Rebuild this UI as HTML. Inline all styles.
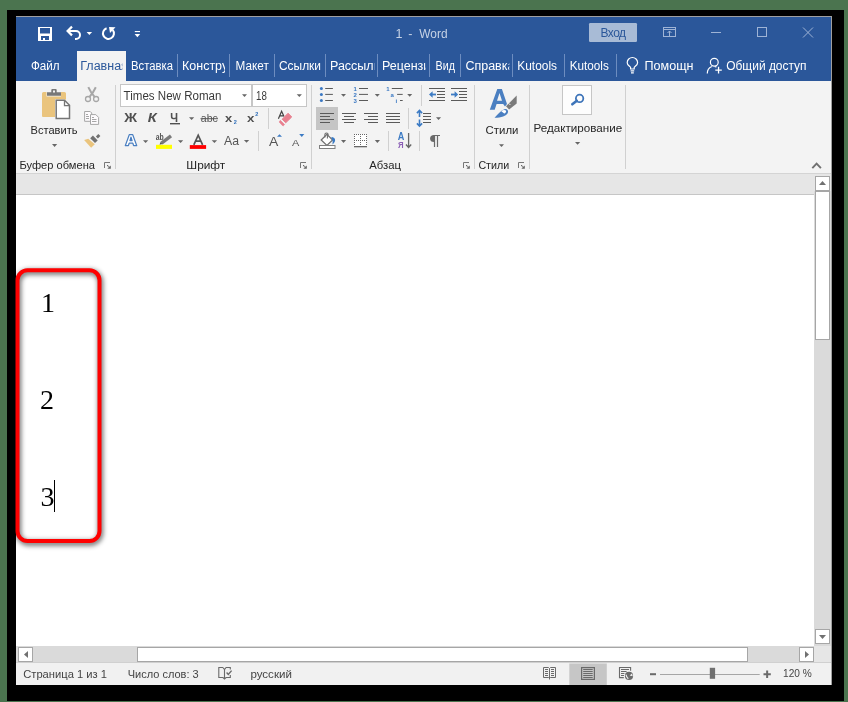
<!DOCTYPE html>
<html><head><meta charset="utf-8">
<style>
html,body{margin:0;padding:0;width:848px;height:702px;overflow:hidden;background:#4b744f}
svg{display:block;will-change:transform}
text{font-family:"Liberation Sans",sans-serif}
.w{fill:#fff;font-size:12.5px}
.r{fill:#262626;font-size:11.5px}
.s{fill:#444;font-size:11px}
.d{font-family:"Liberation Serif",serif;fill:#000;font-size:28px}
</style></head><body>
<svg width="848" height="702" viewBox="0 0 848 702">
<defs>
<clipPath id="c1"><rect x="77" y="50" width="45.3" height="31"/></clipPath>
<clipPath id="c2"><rect x="178" y="50" width="47" height="31"/></clipPath>
<clipPath id="c3"><rect x="326" y="50" width="48.5" height="31"/></clipPath>
<clipPath id="c4"><rect x="378" y="50" width="47.5" height="31"/></clipPath>
<clipPath id="c5"><rect x="461" y="50" width="48.3" height="31"/></clipPath>
<filter id="sh" x="-20%" y="-20%" width="140%" height="140%"><feGaussianBlur stdDeviation="2"/></filter>
</defs>
<!-- frame -->
<rect x="7" y="10" width="837" height="691" fill="#000"/>
<rect x="16" y="16" width="816" height="669" fill="#a0a0a0"/>
<!-- title + tabs -->
<rect x="16" y="17" width="815" height="64" fill="#2b579a"/>
<!-- ribbon -->
<rect x="16" y="81" width="815" height="92" fill="#f3f3f3"/>
<rect x="16" y="173" width="815" height="1" fill="#d4d4d4"/>
<rect x="16" y="174" width="815" height="20" fill="#e6e6e6"/>
<rect x="16" y="194" width="798" height="1" fill="#c6c6c6"/>
<rect x="16" y="195" width="798" height="451" fill="#fff"/>
<!-- vscroll -->
<rect x="814" y="191" width="17" height="455" fill="#dadada"/>
<rect x="815.5" y="176.5" width="14" height="14" fill="#fff" stroke="#a6a6a6"/>
<path d="M819 185h7l-3.5-4z" fill="#707070"/>
<rect x="815.5" y="191.5" width="14" height="148" fill="#fff" stroke="#a6a6a6"/>
<rect x="815.5" y="629.5" width="14" height="14" fill="#fff" stroke="#a6a6a6"/>
<path d="M819 635h7l-3.5 4z" fill="#707070"/>
<!-- hscroll -->
<rect x="16" y="646" width="798" height="16" fill="#dadada"/>
<rect x="814" y="646" width="17" height="16" fill="#e6e6e6"/>
<rect x="18.5" y="647.5" width="14" height="14" fill="#fff" stroke="#a6a6a6"/>
<path d="M24 654.5l4 -3.5v7z" fill="#707070"/>
<rect x="137.5" y="647.5" width="610" height="14" fill="#fff" stroke="#a6a6a6"/>
<rect x="799.5" y="647.5" width="14" height="14" fill="#fff" stroke="#a6a6a6"/>
<path d="M809 654.5l-4 -3.5v7z" fill="#707070"/>
<!-- status -->
<rect x="16" y="662" width="815" height="1" fill="#d0d0d0"/>
<rect x="16" y="663" width="815" height="22" fill="#f1f1f1"/>


<!-- title icons -->
<path fill="#fff" fill-rule="evenodd" d="M38 27h14v14H38z M40 28h10v5.5H40z M41 36h8v4H41z"/>
<rect x="43" y="38" width="2" height="2" fill="#fff"/>
<path d="M67.5 31h8.5a4 4 0 0 1 0 8h-1" fill="none" stroke="#fff" stroke-width="2"/>
<path d="M72 26.6L67.6 31L72 35.4" fill="none" stroke="#fff" stroke-width="2.2"/>
<path d="M86.6 32h5.5l-2.75 3z" fill="#fff"/>
<path d="M106.6 28.2A5.5 5.5 0 1 0 112.7 29.9" fill="none" stroke="#fff" stroke-width="2"/>
<path d="M109 27L115.5 27.3L110 33Z" fill="#fff"/>
<rect x="134.8" y="31" width="5.2" height="1.1" fill="#fff"/>
<path d="M134.6 34h5.6l-2.8 3.2z" fill="#fff"/>
<g fill="none" stroke="#9fb4d6" stroke-width="1">
<rect x="663.5" y="27.5" width="12" height="9"/>
<path d="M663.5 29.5h12 M669.5 31v6 M667.5 33l2-2 2 2"/>
<path d="M711 32.5h10"/>
<rect x="757.5" y="27.5" width="9" height="9"/>
<path d="M803 27.5l10 10 M813 27.5l-10 10"/>
</g>
<!-- title texts -->
<g fill="#c7d3e6" font-size="12.5"><text x="395.5" y="38">1</text><text x="408.3" y="38">-</text><text x="419.3" y="38" textLength="28.2" lengthAdjust="spacingAndGlyphs">Word</text></g>
<rect x="589" y="23" width="48" height="19" rx="1.2" fill="#a8bbd6"/>
<text x="600.5" y="36.9" fill="#2b579a" font-size="12" textLength="25.5" lengthAdjust="spacing">Вход</text>
<!-- tabs -->
<rect x="77" y="51" width="49" height="30" fill="#f3f3f3"/>
<g class="w">
<text x="31" y="70.2" textLength="28.6" lengthAdjust="spacingAndGlyphs">Файл</text>
<text x="131" y="70.2" textLength="42" lengthAdjust="spacingAndGlyphs">Вставка</text>
<text x="235.6" y="70.2" textLength="33.2" lengthAdjust="spacingAndGlyphs">Макет</text>
<text x="279" y="70.2" textLength="42" lengthAdjust="spacingAndGlyphs">Ссылки</text>
<text x="435.6" y="70.2" textLength="19.4" lengthAdjust="spacingAndGlyphs">Вид</text>
<text x="517.3" y="70.2" textLength="39.7" lengthAdjust="spacingAndGlyphs">Kutools</text>
<text x="569.7" y="70.2" textLength="39.1" lengthAdjust="spacingAndGlyphs">Kutools</text>
<text x="644.5" y="70.2" textLength="49" lengthAdjust="spacingAndGlyphs">Помощн</text>
<text x="726.2" y="70.2" textLength="80.4" lengthAdjust="spacingAndGlyphs">Общий доступ</text>
<g clip-path="url(#c2)"><text x="182" y="70.2">Конструктор</text></g>
<g clip-path="url(#c3)"><text x="330" y="70.2">Рассылки</text></g>
<g clip-path="url(#c4)"><text x="382" y="70.2">Рецензирование</text></g>
<g clip-path="url(#c5)"><text x="465.4" y="70.2">Справка</text></g>
</g>
<g clip-path="url(#c1)"><text x="80.3" y="70.2" fill="#2b579a" font-size="12.5">Главная</text></g>

<!-- tab icons -->
<g fill="none" stroke="#fff" stroke-width="1.2">
<path d="M630.6 69V67.6C630.6 66.5 627.2 65.5 627.2 62.7A5.2 5.2 0 0 1 637.6 62.7C637.6 65.5 634.2 66.5 634.2 67.6V69Z"/>
<path d="M630.6 70.8h3.6 M631 72.8h2.8"/>
<circle cx="714.3" cy="62.3" r="3.9"/>
<path d="M707.3 73.6A7.5 7.5 0 0 1 711.8 66.5 M714.8 66.6A5 5 0 0 1 716.5 67"/>
<path d="M715.3 70.2h6.5 M718.55 66.8v6.6" stroke-width="1.3"/>
</g>
<g fill="#6d8dc0">
<rect x="177" y="54" width="1" height="23"/><rect x="229" y="54" width="1" height="23"/><rect x="274" y="54" width="1" height="23"/>
<rect x="325" y="54" width="1" height="23"/><rect x="377" y="54" width="1" height="23"/><rect x="429" y="54" width="1" height="23"/>
<rect x="460" y="54" width="1" height="23"/><rect x="512" y="54" width="1" height="23"/><rect x="564" y="54" width="1" height="23"/>
<rect x="616" y="54" width="1" height="23"/>
</g>

<!-- ribbon separators -->
<g fill="#d0d0d0">
<rect x="115" y="85" width="1" height="84"/>
<rect x="311" y="85" width="1" height="84"/>
<rect x="474" y="85" width="1" height="84"/>
<rect x="529" y="85" width="1" height="84"/>
<rect x="625" y="85" width="1" height="84"/>
<rect x="268" y="108" width="1" height="21"/>
<rect x="258" y="131" width="1" height="20"/>
<rect x="421" y="85" width="1" height="21"/>
<rect x="408" y="108" width="1" height="21"/>
<rect x="388" y="131" width="1" height="20"/>
<rect x="419" y="131" width="1" height="20"/>
</g>
<!-- combos -->
<rect x="120.5" y="84.5" width="131" height="22" fill="#fff" stroke="#c6c6c6"/>
<rect x="252.5" y="84.5" width="54" height="22" fill="#fff" stroke="#c6c6c6"/>
<text x="123.6" y="100" fill="#3a3a3a" font-size="12" textLength="97.8" lengthAdjust="spacingAndGlyphs">Times New Roman</text>
<text x="256" y="100" fill="#3a3a3a" font-size="12" textLength="10.8" lengthAdjust="spacingAndGlyphs">18</text>
<!-- dropdown arrows -->
<g fill="#666">
<path d="M52 144h5.2l-2.6 3z"/>
<path d="M242 94.3h5l-2.5 2.8z"/>
<path d="M296.7 94.3h5.2l-2.6 2.8z"/>
<path d="M189 117.2h5.2l-2.6 2.8z"/>
<path d="M143 140.3h5.2l-2.6 2.8z"/>
<path d="M178 140.3h5.2l-2.6 2.8z"/>
<path d="M211.7 140.3h5.4l-2.7 2.8z"/>
<path d="M243.9 140.1h5.3l-2.65 2.7z"/>
<path d="M341 94.1h5l-2.5 2.7z"/>
<path d="M374.8 94.1h5l-2.5 2.7z"/>
<path d="M407.2 94.1h5l-2.5 2.7z"/>
<path d="M436 117.2h5.1l-2.55 2.8z"/>
<path d="M341 140h5.1l-2.55 2.9z"/>
<path d="M374.8 140h5.2l-2.6 2.9z"/>
<path d="M499 144.3h5l-2.5 2.8z"/>
<path d="M575 142h5.2l-2.6 2.8z"/>
</g>
<!-- dialog launchers -->
<g fill="none" stroke="#777" stroke-width="1">
<path d="M104.5 168V162.5H110"/><path d="M300.5 168V162.5H306"/><path d="M463.5 168V162.5H469"/><path d="M518.5 168V162.5H524"/>
</g>
<g fill="#666">
<path d="M110.8 165.4V168.8H107.4Z"/><rect x="107" y="165" width="1.2" height="1.2"/><rect x="108.2" y="166.2" width="1.2" height="1.2"/>
<path d="M306.8 165.4V168.8H303.4Z"/><rect x="303" y="165" width="1.2" height="1.2"/><rect x="304.2" y="166.2" width="1.2" height="1.2"/>
<path d="M469.8 165.4V168.8H466.4Z"/><rect x="466" y="165" width="1.2" height="1.2"/><rect x="467.2" y="166.2" width="1.2" height="1.2"/>
<path d="M524.8 165.4V168.8H521.4Z"/><rect x="521" y="165" width="1.2" height="1.2"/><rect x="522.2" y="166.2" width="1.2" height="1.2"/>
</g>
<!-- paste -->
<path d="M43.5 92h3v4.5h14.5V92h3.5a1.5 1.5 0 0 1 1.5 1.5V116a1 1 0 0 1-1 1H43a1 1 0 0 1-1-1V93.5A1.5 1.5 0 0 1 43.5 92z" fill="#eac47d"/>
<path d="M47 92.2h4.3v-2.2a1 1 0 0 1 1-1h3.4a1 1 0 0 1 1 1v2.2h4.3v3.6H47z" fill="#787878"/>
<rect x="53" y="90.5" width="2" height="2" fill="#f3f3f3"/>
<path d="M55 99.3h10l5.7 5.7v14.7H55z" fill="#f3f3f3"/>
<path d="M56.2 100.2h8.3l5 5v13.2H56.2z" fill="#fff" stroke="#767676" stroke-width="1.5"/>
<path d="M64.5 100.5v5.2h5" fill="none" stroke="#767676" stroke-width="1.3"/>
<!-- scissors -->
<g fill="none" stroke="#a6a6a6" stroke-width="1.3">
<circle cx="88" cy="99" r="2.5"/><circle cx="96.1" cy="99" r="2.5"/>
<path d="M88.3 87.2Q91 93 94.6 96.9 M95.8 87.2Q93 93 89.5 96.9" stroke-width="2"/>
</g>
<!-- copy -->
<g fill="#fdfbfd" stroke="#a6a6a6" stroke-width="1">
<path d="M84.6 111.5h5.6l1.5 1.5v8.3h-7.1z"/>
<path d="M90.5 114.6h5.3l2.8 2.8v7h-8.1z"/>
</g>
<g stroke="#a6a6a6" stroke-width="1">
<path d="M86 114.5h2 M86 116.5h3 M86 118.5h3 M92 117.5h2 M92 119.5h4.5 M92 121.5h4.5"/>
</g>
<!-- format painter -->
<path d="M84.1 140L88.3 138.7L94.8 144.2L91.1 147.8z" fill="#eac47d"/>
<path d="M92.9 135.6L97.7 140.4L95 143.1L90.2 138.3z" fill="#717171"/>
<path d="M95.9 136.5L98.3 134L100.4 136.1L97.9 138.6z" fill="#717171"/>
<!-- font group icons -->
<g font-family="Liberation Sans" fill="#505050">
<text x="124.3" y="121.8" font-size="12" font-weight="bold" textLength="12.8" lengthAdjust="spacingAndGlyphs">Ж</text>
<text x="147.8" y="121.8" font-size="12" font-weight="bold" font-style="italic" textLength="9" lengthAdjust="spacingAndGlyphs">К</text>
<text x="170.2" y="121.8" font-size="12" font-weight="bold" textLength="7.8" lengthAdjust="spacingAndGlyphs">Ч</text>
<text x="200.8" y="121.9" font-size="11" fill="#555" textLength="17" lengthAdjust="spacingAndGlyphs">abc</text>
<text x="225" y="121.9" font-size="11.5" font-weight="bold" textLength="7.2" lengthAdjust="spacingAndGlyphs">x</text>
<text x="247.1" y="121.9" font-size="11.5" font-weight="bold" textLength="7.4" lengthAdjust="spacingAndGlyphs">x</text>
<text x="224" y="145.1" font-size="12.5" fill="#555" textLength="15" lengthAdjust="spacingAndGlyphs">Aa</text>
</g>
<rect x="170" y="123" width="10" height="1.4" fill="#505050"/>
<rect x="200.5" y="118.2" width="17.5" height="1" fill="#555"/>
<g font-family="Liberation Sans" font-weight="bold" fill="#2f6fba" font-size="5.5">
<text x="233.8" y="123.8">2</text><text x="255.3" y="116">2</text>
</g>
<!-- eraser -->
<path d="M278.4 118.8L281.6 111.3L284 116.5 M280.1 115.9h3.6" fill="none" stroke="#444" stroke-width="1.2"/>
<path d="M288.1 113.2L291.7 117L285.7 122.8L282.2 119.2Z" fill="#e8808f" stroke="#e8808f" stroke-width="1" stroke-linejoin="round"/>
<path d="M280.3 120.3L284.6 124.6L283 126.1L279.1 122Z" fill="#e8808f" stroke="#e8808f" stroke-width="0.6" stroke-linejoin="round"/>
<!-- text effects A -->
<path d="M125.3 145.6L129.3 134.6H132.7L136.7 145.6H133.6L132.8 143.1H129.2L128.4 145.6Z M130 140.7H132L131 137.2Z" fill="#fff" fill-rule="evenodd" stroke="#4a7fc1" stroke-width="1.3" stroke-linejoin="round"/>
<path d="M130 140.7H132L131 137.2Z" fill="#4a7fc1" opacity="0.6"/>
<!-- highlighter -->
<text x="155.8" y="139.6" font-family="Liberation Sans" font-weight="bold" font-size="8.6" fill="#505050" textLength="8" lengthAdjust="spacingAndGlyphs">ab</text>
<path d="M161.5 143.2L171 135.8" stroke="#7a7a7a" stroke-width="3.4" stroke-linecap="butt"/>
<path d="M159.6 144.8L160.4 141.9 162.5 144z" fill="#555"/>
<rect x="156" y="144.8" width="16" height="4.1" fill="#ffff00"/>
<!-- font color -->
<path d="M193.8 144.8L198.2 135.2L202.6 144.8 M195.5 141.2h5.4" fill="none" stroke="#555" stroke-width="1.7"/>
<rect x="189.8" y="145.1" width="16.3" height="3.8" fill="#ff0000"/>
<!-- grow / shrink -->
<text x="269" y="146.4" font-family="Liberation Sans" font-size="12.8" fill="#555" textLength="9.3" lengthAdjust="spacingAndGlyphs">A</text>
<text x="292" y="146.4" font-family="Liberation Sans" font-size="9.8" fill="#555" textLength="7.3" lengthAdjust="spacingAndGlyphs">A</text>
<path d="M277 136.8h5l-2.5-2.6z" fill="#3c7bc4"/>
<path d="M299.2 134h5.1l-2.55 2.9z" fill="#3c7bc4"/>

<!-- paragraph icons -->
<g fill="#3a78c3">
<circle cx="321.4" cy="88.5" r="1.5"/><circle cx="321.4" cy="94.4" r="1.5"/><circle cx="321.4" cy="100.5" r="1.5"/>
</g>
<g stroke="#5a5a5a" stroke-width="1">
<path d="M325.2 88.5h7.7 M325.2 94.4h7.7 M325.2 100.5h7.7"/>
<path d="M359 88.5h9 M359 94.4h9 M359 100.5h9"/>
<path d="M391.8 88.5h10.9 M397.1 94.4h5.6 M400 100.5h2.7"/>
</g>
<g font-family="Liberation Sans" font-weight="bold" fill="#3a78c3" font-size="6">
<text x="353.6" y="90.8">1</text><text x="353.6" y="96.8">2</text><text x="353.6" y="102.8">3</text>
<text x="386.2" y="90.8">1</text><text x="390.6" y="96.8">a</text><text x="395.4" y="102.8">i</text>
</g>
<rect x="316" y="107" width="22" height="23" fill="#c5c5c5"/>
<g stroke="#5a5a5a" stroke-width="1">
<path d="M320 113.5h14 M320 116.5h10 M320 119.5h14 M320 122.5h10"/>
<path d="M342 113.5h14 M344 116.5h10 M342 119.5h14 M344 122.5h10"/>
<path d="M364 113.5h14 M368 116.5h10 M364 119.5h14 M368 122.5h10"/>
<path d="M386 113.5h14 M386 116.5h14 M386 119.5h14 M386 122.5h14"/>
</g>
<!-- indent -->
<g stroke="#5a5a5a" stroke-width="1">
<path d="M429 88.5h16 M437 91.5h8 M437 94.5h8 M437 97.5h8 M429 100.5h16"/>
<path d="M451 88.5h16 M459 91.5h8 M459 94.5h8 M459 97.5h8 M451 100.5h16"/>
<path d="M423 113.5h8 M423 116.5h8 M423 119.5h8 M423 122.5h8"/>
</g>
<g fill="none" stroke="#3c7bc4" stroke-width="1.8">
<path d="M431 94.5h5"/><path d="M429 94.5l3.6-3.3v6.6z" fill="#3c7bc4" stroke="none"/>
<path d="M451 94.5h5"/><path d="M458.2 94.5l-3.6-3.3v6.6z" fill="#3c7bc4" stroke="none"/>
<path d="M419.5 111v6 M419.5 119.5v6 M416.9 113.1l2.6-2.6 2.6 2.6 M416.9 123.4l2.6 2.6 2.6-2.6" stroke-width="1.6"/>
</g>
<!-- shading -->
<path d="M321.2 140L326.9 134.4L332.6 140L326.9 145.4Z" fill="#fff" stroke="#6e6e6e" stroke-width="1.2"/>
<path d="M324.9 137.6V134.6A1.6 1.6 0 0 1 328.1 134.6V135.3 M327.4 134.4V138.6" fill="none" stroke="#6e6e6e" stroke-width="1.1"/>
<path d="M331.3 137.1C333.6 137.1 335.4 138.3 335.1 140.6C334.9 142.3 333.6 143.5 332.4 144.6C332.7 142.6 332.9 141.1 332.1 139.8Z" fill="#3c7bc4"/>
<rect x="319.5" y="145.5" width="15.5" height="3" fill="#fff" stroke="#808080" stroke-width="1"/>
<!-- borders -->
<rect x="354" y="134" width="13" height="12" fill="#fff"/>
<path d="M354 134h1v1h-1zM354 136h1v1h-1zM354 138h1v1h-1zM354 140h1v1h-1zM354 142h1v1h-1zM354 144h1v1h-1zM356 134h1v1h-1zM356 140h1v1h-1zM358 134h1v1h-1zM358 140h1v1h-1zM360 134h1v1h-1zM360 136h1v1h-1zM360 138h1v1h-1zM360 140h1v1h-1zM360 142h1v1h-1zM360 144h1v1h-1zM362 134h1v1h-1zM362 140h1v1h-1zM364 134h1v1h-1zM364 140h1v1h-1zM366 134h1v1h-1zM366 136h1v1h-1zM366 138h1v1h-1zM366 140h1v1h-1zM366 142h1v1h-1zM366 144h1v1h-1z" fill="#666"/>
<rect x="354" y="146" width="13" height="1.3" fill="#666"/>
<!-- sort -->
<text x="397.7" y="139.9" font-family="Liberation Sans" font-weight="bold" font-size="10" fill="#3c7bc4" textLength="6.6" lengthAdjust="spacingAndGlyphs">A</text>
<text x="397.9" y="147.9" font-family="Liberation Sans" font-weight="bold" font-size="9.6" fill="#8a5db5" textLength="5.6" lengthAdjust="spacingAndGlyphs">Я</text>
<path d="M408.6 133v14 M406 144.5l2.6 3 2.6-3" fill="none" stroke="#666" stroke-width="1.3"/>
<!-- pilcrow -->
<path d="M433.5 135.5h6.5 M434.5 135.5v11.4 M437.5 135.5v11.4" fill="none" stroke="#6a6a6a" stroke-width="1.2"/>
<path d="M435 135H434A3.9 3.5 0 0 0 434 142H435Z" fill="#6a6a6a"/>
<!-- styles icon -->
<path d="M489.8 109.7L497.3 89.1h4.6L507 104l-2 2.6-1.8-2.5h-6.6l-1.9 5.6z M497 100.8h5l-2.5-7.9z" fill="#4a7fc1" fill-rule="evenodd"/>
<path d="M506 106.2l10.7-10.7v8.1l-7.6 6z" fill="#7a7a7a"/>
<path d="M508.8 103.4l1.6 1.6" stroke="#f3f3f3" stroke-width="1"/>
<path d="M494.5 117.8c3-3.5 6.5-7.5 10-8.6 2.8-0.5 4.2 1.5 3.3 3.8-1.5 3-6.5 4.8-13.3 4.8z" fill="#4a7fc1"/>
<path d="M501.3 111.2c1.5-1.2 3.5-1.5 4.8-0.4 0.2 1.2-0.8 2.5-1.8 2.8z" fill="#fff"/>
<!-- editing -->
<rect x="562.5" y="85.5" width="29" height="29" fill="#fdfdfd" stroke="#c6c6c6"/>
<circle cx="579.6" cy="98.4" r="3.7" fill="none" stroke="#3d74b9" stroke-width="1.8"/>
<path d="M572.3 104.3l4.5-3.6" stroke="#3d74b9" stroke-width="2.6" stroke-linecap="round"/>
<path d="M812.3 168.2L816.6 163.6L820.9 168.2" fill="none" stroke="#707070" stroke-width="1.9"/>
<!-- ribbon texts -->
<g class="r">
<text x="30.6" y="133.8" textLength="46.9" lengthAdjust="spacingAndGlyphs">Вставить</text>
<text x="19.4" y="169.3" textLength="75.6" lengthAdjust="spacingAndGlyphs">Буфер обмена</text>
<text x="186.3" y="169.2" textLength="38.9" lengthAdjust="spacingAndGlyphs">Шрифт</text>
<text x="369.3" y="169.2" textLength="31.7" lengthAdjust="spacingAndGlyphs">Абзац</text>
<text x="485.6" y="133.5" textLength="32.8" lengthAdjust="spacingAndGlyphs">Стили</text>
<text x="478.4" y="169.2" textLength="30.8" lengthAdjust="spacingAndGlyphs">Стили</text>
<text x="533.4" y="132" textLength="88.8" lengthAdjust="spacingAndGlyphs">Редактирование</text>
</g>
<!-- status texts -->
<g class="s">
<text x="23.2" y="677.7" textLength="83.8" lengthAdjust="spacingAndGlyphs">Страница 1 из 1</text>
<text x="127.7" y="677.7" textLength="71" lengthAdjust="spacingAndGlyphs">Число слов: 3</text>
<text x="250.4" y="677.7" textLength="41.5" lengthAdjust="spacingAndGlyphs">русский</text>
<text x="783" y="677" textLength="28.7" lengthAdjust="spacingAndGlyphs">120 %</text>
</g>


<!-- red box -->
<defs>
<filter id="bs" x="-30%" y="-10%" width="160%" height="120%"><feGaussianBlur stdDeviation="2.6"/></filter>
</defs>
<rect x="18.5" y="272" width="82" height="271" rx="10" fill="none" stroke="#000" stroke-opacity="0.6" stroke-width="5" filter="url(#bs)"/>
<rect x="17.5" y="270.3" width="82" height="270.7" rx="10" fill="none" stroke="#ff0000" stroke-width="4"/>
<!-- status icons -->
<g fill="none" stroke="#6a6a6a" stroke-width="1.1">
<path d="M222.9 667.5h-4.1v10h4.1l1.6 1.5 1.6-1.5h4.2v-2.5 M224.5 669.5v10 M222.9 667.5l1.6 2 1.6-2h4.2v2"/>
<path d="M226.6 672.5l1.7 1.9 3.3-3.8" stroke-width="1.4"/>
</g>
<rect x="569.3" y="663.5" width="37.5" height="21.5" fill="#c6c6c6"/>
<g fill="none" stroke="#6a6a6a" stroke-width="1.1">
<path d="M543.5 667.5H548.5L549.5 668.5L550.5 667.5H555.5V677.5H550.5L549.5 678.5L548.5 677.5H543.5Z" stroke-width="1"/>
<path d="M549.5 668.5V679.5 M545 669.5h3 M545 671.5h3 M545 673.5h3 M545 675.5h3 M551 669.5h3 M551 671.5h3 M551 673.5h3 M551 675.5h3" stroke-width="1"/>
<rect x="581.6" y="667.6" width="12.8" height="11.8" stroke-width="1.2"/>
<path d="M583.2 669.5h9.5 M583.2 671.5h9.5 M583.2 673.5h9.5 M583.2 675.5h9.5 M583.2 677.5h9.5" stroke-width="1"/>
<path d="M623.8 677.6h-4.3v-10.1h11.1v3.2" stroke-width="1.1"/>
<path d="M621 669.5h8 M621 671.5h6 M621 673.5h3.7 M621 675.5h3" stroke-width="1"/>
</g>
<circle cx="629" cy="675.9" r="5" fill="#f1f1f1"/>
<circle cx="629" cy="675.9" r="4.1" fill="#6a6a6a"/>
<path d="M625.9 674.6Q626.5 677 628.3 678.7" stroke="#f1f1f1" stroke-width="1.2" fill="none"/>
<path d="M629.6 675.5L632 673.6L632.7 676.3Z" fill="#f1f1f1"/>
<rect x="650" y="673.2" width="6" height="2" fill="#6a6a6a"/>
<rect x="660" y="674" width="99.7" height="1" fill="#a6a6a6"/>
<rect x="709.8" y="667.8" width="5.3" height="11" fill="#707070"/>
<path d="M763.5 674.3h7.3 M767.15 670.6v7.4" stroke="#6a6a6a" stroke-width="2"/>
<!-- document -->
<text class="d" x="41" y="312">1</text>
<text class="d" x="40" y="409">2</text>
<text class="d" x="40.5" y="506">3</text>
<rect x="54" y="480" width="1" height="32" fill="#000"/>
</svg>
</body></html>
